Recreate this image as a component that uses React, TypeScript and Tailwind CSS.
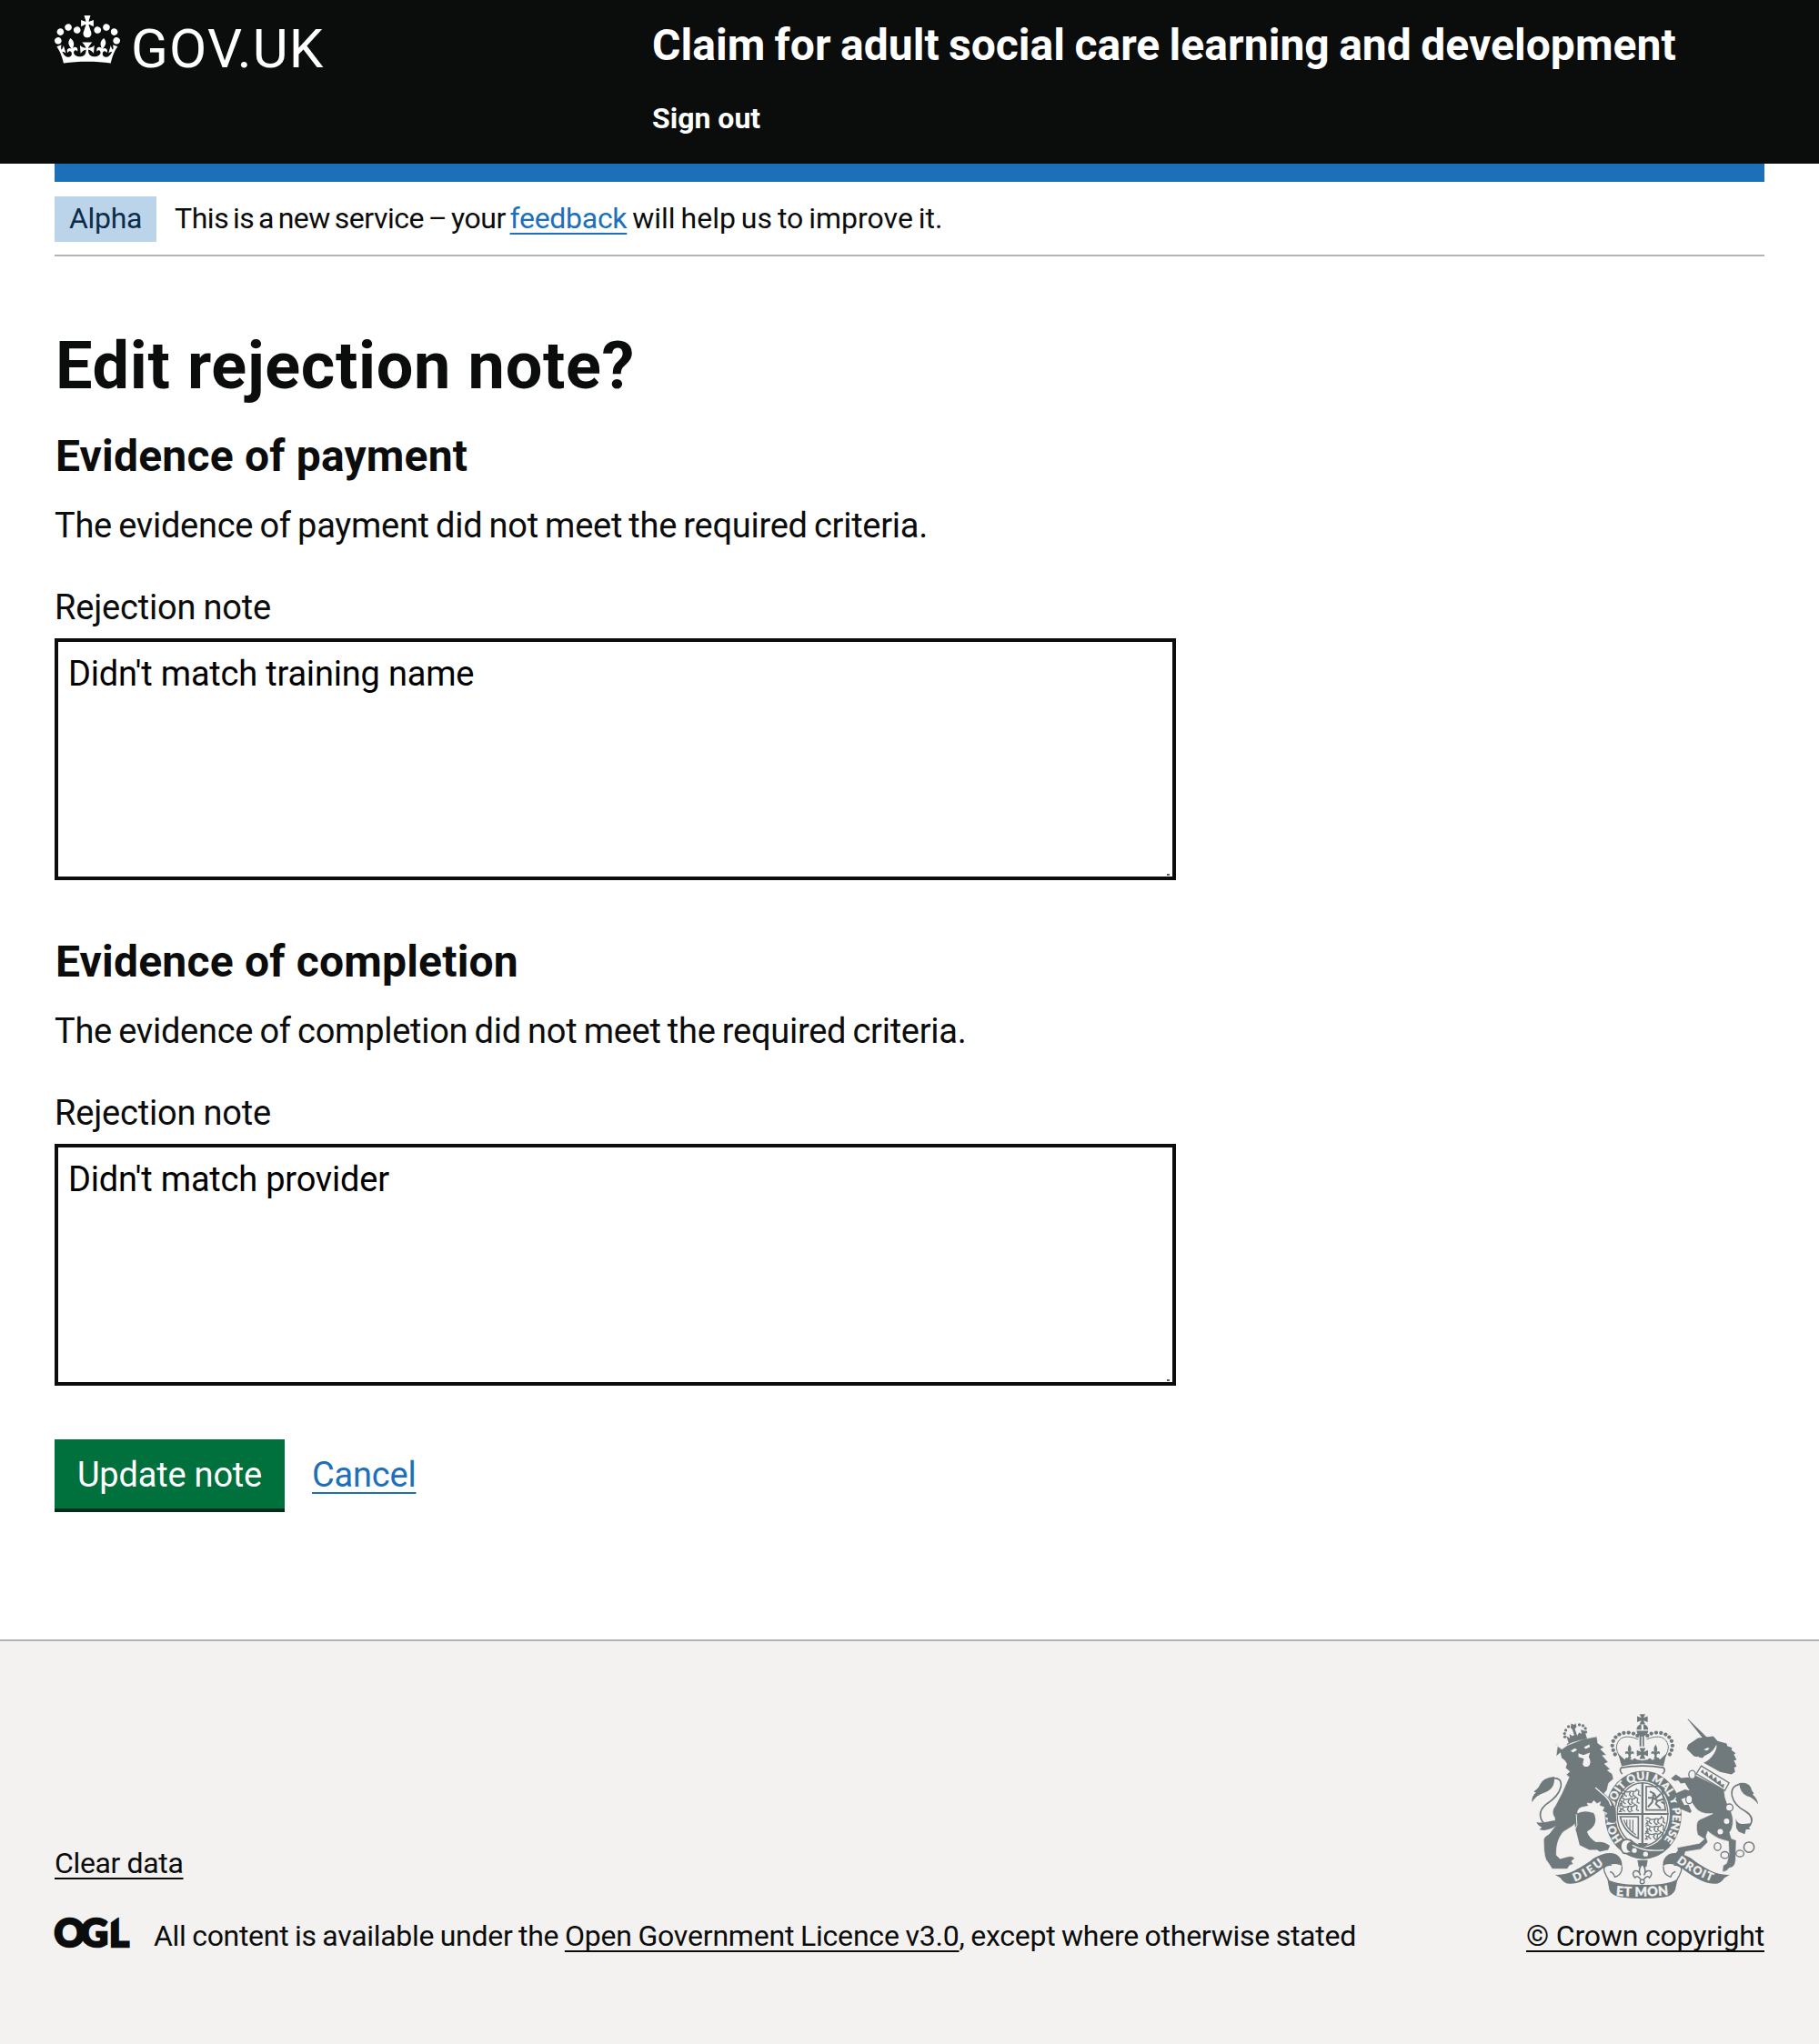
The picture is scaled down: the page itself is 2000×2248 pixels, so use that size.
import type { ReactNode } from "react";

const CREST = "#707a7d";
const PAPER = "#f3f2f1";

function Crown() {
  return (
    <svg viewBox="0 0 132 97" className="mt-[17px] h-[53px] w-[72px] shrink-0 fill-white" aria-hidden="true">
      <path d="M25 30.2c3.5 1.5 7.7-.2 9.1-3.7 1.5-3.6-.2-7.8-3.9-9.2-3.6-1.4-7.6.3-9.1 3.9-1.4 3.5.3 7.5 3.9 9zM9 39.5c3.6 1.5 7.8-.2 9.2-3.7 1.5-3.6-.2-7.8-3.9-9.1-3.6-1.5-7.6.2-9.1 3.8-1.4 3.5.3 7.5 3.8 9zM4.4 57.2c3.5 1.5 7.7-.2 9.1-3.8 1.5-3.6-.2-7.7-3.9-9.1-3.5-1.5-7.6.3-9.1 3.8-1.4 3.5.3 7.6 3.9 9.1zm38.3-21.4c3.5 1.5 7.7-.2 9.1-3.8 1.5-3.6-.2-7.7-3.9-9.1-3.6-1.5-7.6.3-9.1 3.8-1.3 3.6.4 7.7 3.9 9.1zm64.4-5.6c-3.6 1.5-7.8-.2-9.1-3.7-1.5-3.6.2-7.8 3.8-9.2 3.6-1.4 7.7.3 9.2 3.9 1.3 3.5-.4 7.5-3.9 9zm15.9 9.3c-3.6 1.5-7.7-.2-9.1-3.7-1.5-3.6.2-7.8 3.7-9.1 3.6-1.5 7.7.2 9.2 3.8 1.5 3.5-.3 7.5-3.8 9zm4.7 17.7c-3.6 1.5-7.8-.2-9.2-3.8-1.5-3.6.2-7.7 3.9-9.1 3.6-1.5 7.7.3 9.2 3.8 1.3 3.5-.4 7.6-3.9 9.1zM89.3 35.8c-3.6 1.5-7.8-.2-9.2-3.8-1.4-3.6.2-7.7 3.9-9.1 3.6-1.5 7.7.3 9.2 3.8 1.4 3.6-.3 7.7-3.9 9.1zM69.7 17.7l8.9 4.7V9.3l-8.9 2.8c-.2-.3-.5-.6-.9-.9L72.4 0H59.6l3.5 11.2c-.3.3-.6.5-.9.9l-8.8-2.8v13.1l8.8-4.7c.3.3.6.7.9.9l-5 15.4v.1c-.2.8-.4 1.6-.4 2.4 0 4.1 3.1 7.5 7 8.1h.2c.3 0 .7.1 1 .1.4 0 .7 0 1-.1h.2c4-.6 7.1-4.1 7.1-8.1 0-.8-.1-1.7-.4-2.4V34l-5.1-15.4c.4-.2.7-.6 1-.9zM66 92.8c16.9 0 32.8 1.1 47.1 3.2 4-16.9 8.9-26.7 14-33.5l-9.6-3.4c1 4.9 1.1 7.2 0 10.2-1.5-1.4-3-4.3-4.2-8.7L108.6 76c2.8-2 5-3.2 7.5-3.3-4.4 9.4-10 11.9-13.6 11.2-4.3-.8-6.3-4.6-5.6-7.9 1-4.7 5.7-5.9 8-.5 4.3-8.7-3-11.4-7.6-8.8 7.1-7.2 7.9-13.5 2.1-21.1-8 6.1-8.1 12.3-4.5 20.8-4.7-5.4-12.1-2.5-9.5 6.2 3.4-5.2 7.9-2 7.2 3.1-.6 4.3-6.4 7.8-13.5 7.2-10.3-.9-10.9-8-11.2-13.8 2.5-.5 7.1 1.8 11 7.3L80.2 60c-4.1 4.4-8 5.3-12.3 5.4 1.4-4.4 8-11.6 8-11.6H55.5s6.4 7.2 7.9 11.6c-4.2-.1-8-1-12.3-5.4l1.4 16.4c3.9-5.5 8.5-7.7 10.9-7.3-.3 5.8-.9 12.8-11.1 13.8-7.2.6-12.9-2.9-13.5-7.2-.7-5 3.8-8.3 7.1-3.1 2.7-8.7-4.6-11.6-9.4-6.2 3.7-8.5 3.6-14.7-4.6-20.8-5.8 7.6-5 13.9 2.2 21.1-4.7-2.6-11.9.1-7.7 8.8 2.3-5.5 7.1-4.2 8.1.5.7 3.3-1.3 7.1-5.7 7.9-3.5.7-9-1.8-13.5-11.2 2.5.1 4.7 1.3 7.5 3.3l-4.7-15.4c-1.2 4.4-2.7 7.2-4.3 8.7-1.1-3-.9-5.3 0-10.2l-9.5 3.4c5 6.9 9.9 16.7 14 33.5 14.8-2.1 30.8-3.2 47.7-3.2z" />
    </svg>
  );
}

function OglMark() {
  return (
    <svg viewBox="0 0 82 34" className="h-[34px] w-[82px] shrink-0 overflow-visible fill-[#0b0c0c]" aria-label="OGL">
      <text
        x="-0.5 28.5 60"
        y="32"
        fontFamily="Lato, sans-serif"
        fontWeight="900"
        fontSize="42"
        stroke="#0b0c0c"
        strokeWidth="2.6"
      >
        OGL
      </text>
      <path d="M61-1h10l-10 7z" fill={PAPER} />
    </svg>
  );
}

const CROWN_BEADS = [
  [421, 146], [408, 139], [392, 136], [376, 137], [361, 142], [349, 151], [341, 164], [338, 179], [341, 194], [347, 208],
];
const LION_BEADS = [
  [184, 128], [180, 139], [181, 150], [193, 116], [229, 110], [241, 113], [249, 122], [250, 134],
];
const CHAIN = [
  [602, 275, 11, 14], [592, 357, 11, 14], [725, 384, 12, 12], [686, 513, 11, 13], [710, 541, 13, 11], [760, 536, 13, 11],
];

function CrownFleur({ x, y }: { x: number; y: number }) {
  return (
    <path
      transform={`translate(${x} ${y})`}
      d="M0-24q10 14 3 25 4-5 9-3 5 4 1 10-3-5-8-1l-2 6 3 9H-6l3-9-2-6q-5-4-8 1-4-6 1-10 5-2 9 3-7-11 3-25z"
    />
  );
}

/* One passant lion from the quartered shield. */
function Passant({ x, y }: { x: number; y: number }) {
  return (
    <path
      transform={`translate(${x} ${y})`}
      fill="none"
      stroke={CREST}
      strokeWidth="4"
      d="M2 4q6-8 12-2 8 6 20 1 6-2 10 2l-2 10 6 4M4 8l6 4-6 8h8M16 6l-2 8 8 6M34 5l-4 8 6 8h6M44 4q10 0 10-8l8 6-2 12 8 4"
    />
  );
}

function RoyalArms() {
  return (
    <svg viewBox="71 75 752 612" className="h-[204px] w-[250px] overflow-visible" fill={CREST} aria-hidden="true">
      {/* imperial crown */}
      <path d="M428 75h19l-6 12 14-5v19l-14-5 6 13h-19l6-13-14 5V82l14 5z" />
      <path d="M418 126q1-15 16-17v17zM457 126q-1-15-16-17v17zM418 130h39q-2 13-14 17v35h-5v-33h-4v33h-6v-36q-9-5-10-16z" />
      {CROWN_BEADS.map(([x, y]) => (
        <g key={`${x}-${y}`}>
          <circle cx={x} cy={y} r="6.5" />
          <circle cx={875 - x} cy={y} r="6.5" />
        </g>
      ))}
      <path
        d="M424 158q-62-24-72 22-2 16 14 42M451 158q62-24 72 22 2 16-14 42"
        fill="none"
        stroke={CREST}
        strokeWidth="3"
      />
      <path d="M357 205l22 20q4-10 12-4l14 6q6-12 14-2l18 3 18-3q8-10 14 2l14-6q8-6 12 4l22-20-10 42q-69-18-138 0z" />
      <CrownFleur x={395} y={200} />
      <CrownFleur x={481} y={200} />
      <path d="M428 187h20l-6 13 14-6v20l-14-5 5 14h-19l5-14-14 5v-20l14 6z" />
      <path d="M371 273q-12-12-3-21 70-12 139 0 9 9-3 21" fill={PAPER} stroke={CREST} strokeWidth="5" />

      {/* garter */}
      <ellipse cx="440" cy="408" rx="127" ry="146" />
      <ellipse cx="438" cy="406" rx="90" ry="110" fill={PAPER} />
      <ellipse cx="438" cy="406" rx="84" ry="104" fill="none" stroke={CREST} strokeWidth="4" />
      <path id="garter" d="M440 524A97 115 0 0 1 440 292A97 115 0 0 1 440 524" fill="none" />
      <text fontFamily="Lato, sans-serif" fontWeight="900" fontSize="36" fill={PAPER} stroke={PAPER} strokeWidth="1">
        <textPath href="#garter" startOffset="78" textLength="516" lengthAdjust="spacing">
          {"HONI\u00a0 SOIT QUI MAL Y PENSE"}
        </textPath>
      </text>

      {/* quartered shield */}
      <path d="M434 303h7v206h-7zM352 402h172v6H352z" />
      <path d="M364 414h60v72q-48-20-60-72zM450 314h50l14 78h-64z" fill="none" stroke={CREST} strokeWidth="5" />
      <Passant x={364} y={327} />
      <Passant x={360} y={352} />
      <Passant x={358} y={377} />
      <Passant x={446} y={418} />
      <Passant x={446} y={443} />
      <Passant x={444} y={468} />
      <path
        d="M462 330l14 8 8 14 14-14M456 352l18 0 14 10 18-6M474 340l-4 26-14 16M488 358l-6 14 16 14M500 366l12 4"
        fill="none"
        stroke={CREST}
        strokeWidth="6"
      />
      <path d="M376 424q10 32 40 50M386 424v20M396 424v32M406 424v42" fill="none" stroke={CREST} strokeWidth="3.5" />
      <path d="M422 501h34l-8 12h-18z" />

      {/* buckle and strap */}
      <path d="M398 488q26 26 66 32 30 4 58-2-34 36-82 36-44-2-72-30z" />
      <path d="M404 508q44 24 104 16" fill="none" stroke={PAPER} strokeWidth="4" />
      <path
        d="M372 494q18-12 32 4-16 2-16 16t16 14q-12 12-30 6-16-20-2-40z"
        fill={PAPER}
        stroke={CREST}
        strokeWidth="5"
      />
      <circle cx="411" cy="526" r="8" fill={PAPER} />
      <circle cx="448" cy="538" r="8" fill={PAPER} />

      {/* lion */}
      <path
        d="M171 191l18-13 50-20 48-9 3 22 21 14-12 6 20 19-14 2 20 22-13 5 19 18-9 4 16 12 4 16-16 14-6 24-9 10 25 24 14 24 3 42q-4 14-28 6-8-4-2-14-8 0-12-8l10-8-16-8 6-12-16-6 4-12-12 6-10-10-8 10-14-2 4 10-12 2q-26 2-24 24 2 26-16 40l-32 20q-24 30-22 76l12 12 22-6q22-6 26 6l-10 8 6 10-12 4-8 12-50 0-14-22q-14-10-14-68-4-14 18-26l20-26-2-28q-14-20 2-38l22-42 24-54-10-8 12-10-14-12 4-14-6-10-12-10-3-16-14 12 5-38-10-4z"
        stroke={PAPER}
        strokeWidth="2"
      />
      <path d="M220 404q24-14 56-2 12 18 2 40-8 14-24 22 8 22 30 34 26-4 46 12l-6 14-28 6-8-6-26 0-32-16-10-40q-12-26 0-64z" />
      <path d="M219 406l2 36-12 26" fill="none" stroke={PAPER} strokeWidth="3" />
      <path d="M282 318l34 30q14 14 18 30" fill="none" stroke={PAPER} strokeWidth="4" />
      <path d="M200 197l14-9 8 5-14 8zM244 184l18-9 2 8-14 7zM226 204l16 6 22-8-4 14q12 20-2 32-14 4-18-8l4-18-18-6z" fill={PAPER} />
      {LION_BEADS.map(([x, y]) => (
        <circle key={`${x}-${y}`} cx={x} cy={y} r="5" />
      ))}
      <path d="M202 106l10 4 4-6 4 12-6 8 8 22 6-10 8 4-2-14 12 4 8 24-60 17-8-24 12 8-2-14 10 6 6-3-6-18-6-6z" />
      <path d="M188 175q28-18 66-20" fill="none" stroke={CREST} strokeWidth="4" />
      <path
        d="M140 287q32-4 28 28-8 32-46 56-34 26-16 58 20 26 50 8"
        fill="none"
        stroke={CREST}
        strokeWidth="5"
      />
      <path d="M72 367q-2-20 14-34-6 0-8-2 16-10 20-22 10-24 48-27 4 40-32 52-28 8-42 33z" />
      <path d="M87 432q16 4 30 0l30-6 10 12q-12 16-46 21l-14-2 8-8q-12-4-18-17z" />

      {/* unicorn */}
      <path
        d="M764 306q-36 4-30 40 8 32 44 50 32 20 16 46-14 20-34 0"
        fill="none"
        stroke={CREST}
        strokeWidth="5"
      />
      <path d="M758 303q28-4 38 14 2 12 10 20l-4 4q14 10 19 33-18-24-38-28-24-12-25-43z" />
      <path d="M746 420q6 20 26 18l26-2-10 12 6 8-14 0-4 16-20-8-8-12z" />
      <path d="M588 90l80 78-14 8-66-83z" />
      <path d="M672 148l14 16 30 8 2 8 16 6-2 8 14 10-6 4 9 18-9 2 9 20-8 4 3 14-12 8-38-8-54-30q20-8 34-30 12-20 8-30-10 24-30 32-12 4-16 12l-28-6-24-24 5-14 32-22z" />
      <path d="M640 192l12-6 8 2-8 7zM606 220l18-6-4 10z" fill={PAPER} />
      <path
        d="M616 278l92 46q0 26 12 52 22 36 16 66-2 16-10 24l6 20 16 6-2 66q-2 26-22 26-8 14-22 12l2-20 12-8 8-28-2-44q-34-6-56-24l-12-10-6 18 6 18-24 24-50 8-4 14-36-2 14-16-2-10 74-14 16-14-22-14q-10-40 6-50l44-20q-40 4-58-20-20-26-18-56 4-26 16-48z"
        stroke={PAPER}
        strokeWidth="2"
      />
      <path d="M612 290l-26-6-20 2-18-12-16 14 12 8 12-2 8 10 14-2 16 26 24 12zM610 332l-32-8-28 12-2 22 14 30 34 14 4-6-10-22-14 2-10-20 16-6 22 18z" />
      <path d="M632 246l92 56-14 26-94-56z" fill={PAPER} stroke={CREST} strokeWidth="4" />
      <path d="M630 266l8-8 4 14 10-8 4 18 12-10 2 18 12-8 2 18 12-6 2 14 10-2-2 14z" />
      {CHAIN.map(([x, y, rx, ry]) => (
        <ellipse key={`${x}-${y}`} cx={x} cy={y} rx={rx} ry={ry} fill={PAPER} stroke={CREST} strokeWidth="4" />
      ))}
      <circle cx="790" cy="515" r="17" fill="none" stroke={CREST} strokeWidth="4.5" />
      <circle cx="716" cy="429" r="9" fill={PAPER} />
      <circle cx="695" cy="464" r="9" fill={PAPER} />

      {/* motto ribbon */}
      <path d="M148 606q34 2 62-12 46-24 66-42 44-26 74-14 22 14 20 40-14-12-44-4-20 10-34 22-56 40-92 40-20 2-34-20z" />
      <path d="M727 606q-34 2-62-12-46-24-66-42-44-26-74-14-22 14-20 40 14-12 44-4 20 10 34 22 56 40 92 40 20 2 34-20z" />
      <path
        d="M336 574q-32 0-24 22 6 16 14 28M370 578q2 28-24 36-4-16-16-18M541 574q32 0 24 22-6 16-14 28M507 578q-2 28 24 36 4-16 16-18"
        fill="none"
        stroke={CREST}
        strokeWidth="4"
      />
      <path d="M322 622q30 18 116 18t116-20l-8 36q-8 20-36 24-74 10-146 0-30-6-36-24z" />
      <path id="dieu" d="M214 629Q262 612 316 566" fill="none" />
      <path id="droit" d="M550 564Q606 606 672 630" fill="none" />
      <path id="mon" d="M350 675Q437 682 527 672" fill="none" />
      <g fontFamily="Lato, sans-serif" fontWeight="900" fill={PAPER} stroke={PAPER} strokeWidth="1">
        <text fontSize="37">
          <textPath href="#dieu" textLength="112" lengthAdjust="spacing">DIEU</textPath>
        </text>
        <text fontSize="37">
          <textPath href="#droit" textLength="132" lengthAdjust="spacing">DROIT</textPath>
        </text>
        <text fontSize="43">
          <textPath href="#mon" textLength="174" lengthAdjust="spacing">ET MON</textPath>
        </text>
      </g>

      {/* lily */}
      <path d="M421 558h34l-4 22h-26z" />
      <path
        d="M437 570q16 20 6 38 6-18 20-14 10 10-2 22-6-8-14 0l-10 12-10-12q-8-8-14 0-12-12-2-22 14-4 20 14-10-18 6-38z"
        fill={PAPER}
        stroke={CREST}
        strokeWidth="4.5"
      />
      <circle cx="437" cy="629" r="7" fill={PAPER} stroke={CREST} strokeWidth="4" />
    </svg>
  );
}

const link = "underline decoration-2 underline-offset-[5px] [text-decoration-skip-ink:none]";

function NoteSection({ title, text, value }: { title: string; text: ReactNode; value: string }) {
  return (
    <section>
      <h2 className="pl-px text-[48px] leading-[60px] font-bold tracking-[0.2px]">{title}</h2>
      <p className="mt-[21px] text-[38px] leading-[50px] tracking-[-0.27px] [word-spacing:-1.9px]">{text}</p>
      <label className="mt-10 block text-[38px] leading-[50px] tracking-[-0.2px] [word-spacing:-1px]">
        Rejection note
      </label>
      <div className="relative mt-[9px] w-[1233px]">
        <textarea
          defaultValue={value}
          className="block h-[266px] w-full resize-none border-4 border-[#0b0c0c] pt-[10px] pl-[11px] text-[38px] leading-[50px] tracking-[-0.2px] text-black outline-none"
        />
        <span className="absolute right-[7px] bottom-[5px] h-[2px] w-[3px] bg-[#5f5f5f]" />
      </div>
    </section>
  );
}

export default function App() {
  return (
    <div className="flex h-[2248px] w-[2000px] flex-col bg-white font-['Roboto',sans-serif] text-[#0b0c0c]">
      <header className="flex h-[180px] shrink-0 bg-[#0b0c0c] px-[60px] text-white">
        <div className="flex w-[657px] items-start">
          <Crown />
          <span className="mt-6 ml-[12px] text-[60px] leading-[60px] tracking-[1.2px]">GOV.UK</span>
        </div>
        <div className="flex flex-col pt-5">
          <span className="text-[48px] leading-[60px] font-bold tracking-[0.05px] [word-spacing:-1.7px]">
            Claim for adult social care learning and development
          </span>
          <a className="mt-[30px] text-[32px] leading-10 font-bold">Sign out</a>
        </div>
      </header>

      <div className="mx-[60px] h-5 shrink-0 bg-[#1d70b8]" />
      <div className="mx-[60px] flex h-[82px] shrink-0 items-start border-b-2 border-[#b1b4b6] pt-4 text-[32px] leading-[48px]">
        <strong className="h-[50px] w-[112px] bg-[#bbd4ea] text-center font-normal tracking-[-0.3px] text-[#0c2d4a]">
          Alpha
        </strong>
        <span className="ml-5 tracking-[-0.45px] [word-spacing:-2.8px]">
          This is a new service – your <a className={`${link} tracking-[-0.3px] text-[#1d70b8]`}>feedback</a>
          <span className="tracking-normal [word-spacing:-2px]"> will help us to improve it.</span>
        </span>
      </div>

      <main className="flex flex-1 flex-col px-[60px] pt-[81px]">
        <h1 className="pl-px text-[72px] leading-20 font-bold tracking-[0.66px]">Edit rejection note?</h1>
        <div className="mt-[29px] flex flex-col gap-[60px]">
          <NoteSection
            title="Evidence of payment"
            text="The evidence of payment did not meet the required criteria."
            value="Didn't match training name"
          />
          <NoteSection
            title="Evidence of completion"
            text="The evidence of completion did not meet the required criteria."
            value="Didn't match provider"
          />
        </div>
        <div className="mt-[59px] flex items-start gap-[30px] text-[38px] leading-[78px] tracking-[-0.2px]">
          <button className="h-20 w-[253px] border-b-4 border-[#002d18] bg-[#00703c] text-white">
            <span className="block h-[76px]">Update note</span>
          </button>
          <a className="text-[#1d70b8] underline decoration-2 underline-offset-[6px]">Cancel</a>
        </div>
      </main>

      <footer className="flex h-[445px] shrink-0 items-end justify-between border-t-2 border-[#b1b4b6] bg-[#f3f2f1] px-[60px] pb-[99px] text-[32px] leading-10">
        <div>
          <a className={`${link} tracking-[-0.36px]`}>Clear data</a>
          <div className="mt-10 flex items-start">
            <OglMark />
            <span className="ml-[27px] tracking-[-0.3px] [word-spacing:-1px]">
              All content is available under the{" "}
              <a className={`${link} tracking-[-0.2px]`}>Open Government Licence v3.0</a>
              <span className="tracking-[-0.26px]">, except where otherwise stated</span>
            </span>
          </div>
        </div>
        <div className="flex w-[262px] flex-col items-center">
          <RoyalArms />
          <a className={`${link} mt-5 tracking-[-0.18px] whitespace-nowrap`}>© Crown copyright</a>
        </div>
      </footer>
    </div>
  );
}
